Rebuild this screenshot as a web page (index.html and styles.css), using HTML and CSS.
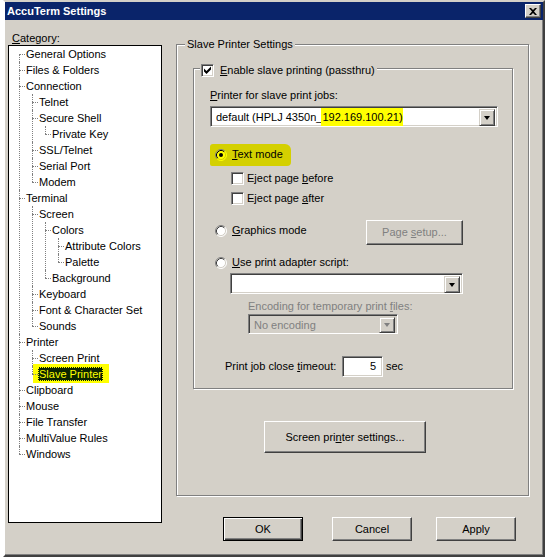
FILE: index.html
```html
<!DOCTYPE html>
<html lang="en">
<head>
    <meta charset="UTF-8">
    <meta name="viewport" content="width=device-width, initial-scale=1.0">
    <title>AccuTerm Settings</title>
    <link rel="stylesheet" href="styles.css">
</head>
<body>
    <div class="window">
        <div class="titlebar">
            <span class="title">AccuTerm Settings</span>
            <span class="close-btn">
                <svg width="8" height="7" viewBox="0 0 8 7"><path d="M0 0h2l2 2 2-2h2L5 3.5 8 7H6L4 5 2 7H0l3-3.5z" fill="#000"/></svg>
            </span>
        </div>

        <div class="main">
            <div class="left-col">
                <div class="cat-label"><u>C</u>ategory:</div>
                <div class="tree-box">
                    <ul class="tree">
                        <li><span class="node">General Options</span></li>
                        <li><span class="node">Files &amp; Folders</span></li>
                        <li><span class="node">Connection</span>
                            <ul>
                                <li><span class="node">Telnet</span></li>
                                <li><span class="node">Secure Shell</span>
                                    <ul>
                                        <li><span class="node">Private Key</span></li>
                                    </ul>
                                </li>
                                <li><span class="node">SSL/Telnet</span></li>
                                <li><span class="node">Serial Port</span></li>
                                <li><span class="node">Modem</span></li>
                            </ul>
                        </li>
                        <li><span class="node">Terminal</span>
                            <ul>
                                <li><span class="node">Screen</span>
                                    <ul>
                                        <li><span class="node">Colors</span>
                                            <ul>
                                                <li><span class="node">Attribute Colors</span></li>
                                                <li><span class="node">Palette</span></li>
                                            </ul>
                                        </li>
                                        <li><span class="node">Background</span></li>
                                    </ul>
                                </li>
                                <li><span class="node">Keyboard</span></li>
                                <li><span class="node">Font &amp; Character Set</span></li>
                                <li><span class="node">Sounds</span></li>
                            </ul>
                        </li>
                        <li><span class="node">Printer</span>
                            <ul>
                                <li><span class="node">Screen Print</span></li>
                                <li><span class="tree-marker"><span class="node sel">Slave Printer</span></span></li>
                            </ul>
                        </li>
                        <li><span class="node">Clipboard</span></li>
                        <li><span class="node">Mouse</span></li>
                        <li><span class="node">File Transfer</span></li>
                        <li><span class="node">MultiValue Rules</span></li>
                        <li><span class="node">Windows</span></li>
                    </ul>
                </div>
            </div>

            <div class="right-col">
                <div class="group outer-group">
                    <div class="group-title outer-title">Slave Printer Settings</div>

                    <div class="group inner-group">
                        <div class="group-title inner-title">
                            <span class="checkbox">
                                <svg width="11" height="11" viewBox="1 1 11 11"><polygon points="3,4.5 5.5,7 10,2.5 10,5.5 5.5,10 3,7.5" fill="#000"/></svg>
                            </span>
                            <span class="cb-text"><u>E</u>nable slave printing (passthru)</span>
                        </div>

                        <div class="field-label printer-label"><u>P</u>rinter for slave print jobs:</div>
                        <div class="combo printer-combo">
                            <span class="combo-text">default (HPLJ 4350n_<span class="hl">192.169.100.21)</span></span>
                            <span class="combo-btn"><span class="arrow"></span></span>
                        </div>

                        <div class="row text-mode-row">
                            <span class="row-marker">
                                <svg class="radio" width="12" height="12" viewBox="0 0 12 12">
                                    <circle cx="6" cy="6" r="5" fill="#ffff00"/>
                                    <path d="M2.11 9.89A5.5 5.5 0 0 1 9.89 2.11" fill="none" stroke="#808080"/>
                                    <path d="M9.89 2.11A5.5 5.5 0 0 1 2.11 9.89" fill="none" stroke="#ffff00"/>
                                    <path d="M2.82 9.18A4.5 4.5 0 0 1 9.18 2.82" fill="none" stroke="#000"/>
                                    <path d="M9.18 2.82A4.5 4.5 0 0 1 2.82 9.18" fill="none" stroke="#d4d000"/>
                                    <circle cx="6" cy="6" r="2" fill="#000"/>
                                </svg>
                                <span class="radio-text"><u>T</u>ext mode</span>
                            </span>
                        </div>

                        <div class="row check-row eject-before">
                            <span class="checkbox"></span>
                            <span class="cb-text">Eject page <u>b</u>efore</span>
                        </div>
                        <div class="row check-row eject-after">
                            <span class="checkbox"></span>
                            <span class="cb-text">Eject page <u>a</u>fter</span>
                        </div>

                        <div class="row radio-row graphics-row">
                            <span class="radio-label">
                                <svg class="radio" width="12" height="12" viewBox="0 0 12 12">
                                    <circle cx="6" cy="6" r="5" fill="#fff"/>
                                    <path d="M2.11 9.89A5.5 5.5 0 0 1 9.89 2.11" fill="none" stroke="#808080"/>
                                    <path d="M9.89 2.11A5.5 5.5 0 0 1 2.11 9.89" fill="none" stroke="#fff"/>
                                    <path d="M2.82 9.18A4.5 4.5 0 0 1 9.18 2.82" fill="none" stroke="#404040"/>
                                    <path d="M9.18 2.82A4.5 4.5 0 0 1 2.82 9.18" fill="none" stroke="#d4d0c8"/>
                                </svg>
                                <span class="radio-text"><u>G</u>raphics mode</span>
                            </span>
                            <span class="btn page-setup disabled"><span>Page <u>s</u>etup...</span></span>
                        </div>

                        <div class="row radio-row adapter-row">
                            <span class="radio-label">
                                <svg class="radio" width="12" height="12" viewBox="0 0 12 12">
                                    <circle cx="6" cy="6" r="5" fill="#fff"/>
                                    <path d="M2.11 9.89A5.5 5.5 0 0 1 9.89 2.11" fill="none" stroke="#808080"/>
                                    <path d="M9.89 2.11A5.5 5.5 0 0 1 2.11 9.89" fill="none" stroke="#fff"/>
                                    <path d="M2.82 9.18A4.5 4.5 0 0 1 9.18 2.82" fill="none" stroke="#404040"/>
                                    <path d="M9.18 2.82A4.5 4.5 0 0 1 2.82 9.18" fill="none" stroke="#d4d0c8"/>
                                </svg>
                                <span class="radio-text"><u>U</u>se print adapter script:</span>
                            </span>
                        </div>
                        <div class="combo adapter-combo">
                            <span class="combo-text"></span>
                            <span class="combo-btn"><span class="arrow"></span></span>
                        </div>

                        <div class="field-label encoding-label disabled">Encoding for temporary print <u>f</u>iles:</div>
                        <div class="combo encoding-combo disabled">
                            <span class="combo-text">No encoding</span>
                            <span class="combo-btn"><span class="arrow"></span></span>
                        </div>

                        <div class="row timeout-row">
                            <span class="timeout-label">Print job close <u>t</u>imeout:</span>
                            <span class="edit">5</span>
                            <span class="unit">sec</span>
                        </div>
                    </div>

                    <span class="btn screen-btn"><span>Screen pri<u>n</u>ter settings...</span></span>
                </div>

                <div class="dialog-buttons">
                    <span class="btn default-btn"><span>OK</span></span>
                    <span class="btn"><span>Cancel</span></span>
                    <span class="btn"><span>Apply</span></span>
                </div>
            </div>
        </div>
    </div>
</body>
</html>
```

FILE: styles.css
```css
body {
    margin: 0;
    background: #fff;
    font-family: "Liberation Sans", Arial, sans-serif;
    font-size: 11px;
    color: #000;
}

.window {
    box-sizing: border-box;
    width: 542px;
    height: 557px;
    margin-left: 3px;
    background: #d4d0c8;
    border: 2px solid;
    border-color: #d4d0c8 #404040 #404040 #fff;
    box-shadow: inset -1px -1px 0 #808080;
}

.titlebar {
    display: flex;
    align-items: center;
    height: 18px;
    padding: 0 2px;
    background: #0a246a;
}
.title {
    color: #fff;
    font-weight: bold;
    line-height: 18px;
}
.close-btn {
    box-sizing: border-box;
    display: flex;
    align-items: center;
    justify-content: center;
    width: 16px;
    height: 14px;
    margin-left: auto;
    background: #d4d0c8;
    border: 1px solid;
    border-color: #fff #404040 #404040 #fff;
    box-shadow: inset -1px -1px 0 #808080;
}

.main {
    display: flex;
    padding-left: 3px;
}

.left-col {
    width: 154px;
    padding-top: 11px;
}
.cat-label {
    line-height: 14px;
    padding-left: 4px;
}
.tree-box {
    box-sizing: border-box;
    height: 478px;
    background: #fff;
    border: 1px solid #000;
    overflow: hidden;
}

.tree, .tree ul {
    list-style: none;
    margin: 0;
    padding: 0 0 0 13px;
}
.tree {
    padding-left: 16px;
}
.tree li {
    position: relative;
    line-height: 16px;
    white-space: nowrap;
}
.tree li::before {
    content: "";
    position: absolute;
    left: -6px;
    top: 8px;
    width: 6px;
    border-top: 1px dotted #808080;
}
.tree li::after {
    content: "";
    position: absolute;
    left: -6px;
    top: 0;
    bottom: 0;
    border-left: 1px dotted #808080;
}
.tree li:last-child::after {
    bottom: auto;
    height: 8px;
}
.tree > li:first-child::after {
    top: 8px;
}
.node {
    padding: 0 1px;
}
.tree-marker {
    background: #ffff00;
    padding: 4px 6px 3px 5px;
    margin: 0 -6px 0 -5px;
}
.node.sel {
    position: relative;
    z-index: 1;
    background: #0a2400;
    color: #ffff00;
    padding: 1px;
    outline: 1px dotted #ffff00;
    outline-offset: -1px;
}

.right-col {
    width: 353px;
    margin-left: 14px;
}

.group {
    border: 1px solid #808080;
    box-shadow: 1px 1px 0 #fff, inset 1px 1px 0 #fff;
}
.group-title {
    width: max-content;
    background: #d4d0c8;
}
.outer-group {
    margin-top: 24px;
    padding: 0 15px 42px 16px;
}
.outer-title {
    line-height: 13px;
    margin: -7px 0 0 -8px;
    padding: 0 2px;
}
.inner-group {
    margin-top: 17px;
    padding: 0 16px 15px 16px;
}
.inner-title {
    display: flex;
    align-items: center;
    height: 14px;
    line-height: 14px;
    margin: -6px 0 0 -10px;
    padding: 0 2px 0 1px;
}

.checkbox {
    box-sizing: border-box;
    display: flex;
    flex: none;
    width: 13px;
    height: 13px;
    background: #fff;
    border: 1px solid;
    border-color: #808080 #fff #fff #808080;
    box-shadow: inset 1px 1px 0 #404040, inset -1px -1px 0 #d4d0c8;
}
.cb-text {
    margin-left: 6px;
}

.field-label {
    line-height: 13px;
}
.printer-label {
    margin-top: 12px;
}

.combo {
    box-sizing: border-box;
    display: flex;
    height: 21px;
    padding: 2px;
    background: #fff;
    border: 1px solid;
    border-color: #808080 #fff #fff #808080;
    box-shadow: inset 1px 1px 0 #404040, inset -1px -1px 0 #d4d0c8;
}
.combo-text {
    flex: 1;
    padding-left: 3px;
    line-height: 17px;
    white-space: nowrap;
}
.combo-btn {
    box-sizing: border-box;
    display: flex;
    align-items: center;
    justify-content: center;
    width: 16px;
    height: 17px;
    background: #d4d0c8;
    border: 1px solid;
    border-color: #d4d0c8 #404040 #404040 #d4d0c8;
    box-shadow: inset 1px 1px 0 #fff, inset -1px -1px 0 #808080;
}
.arrow {
    width: 0;
    height: 0;
    border-left: 3.5px solid transparent;
    border-right: 3.5px solid transparent;
    border-top: 4px solid #000;
}
.hl {
    background: #ffff00;
    padding: 3px 0 3px 1px;
    margin-left: -1px;
}
.printer-combo {
    width: 288px;
    margin-top: 4px;
}

.row {
    display: flex;
    align-items: center;
    height: 13px;
    line-height: 13px;
}
.radio {
    flex: none;
}
.radio-text {
    margin-left: 5px;
}
.text-mode-row {
    margin-top: 21px;
}
.row-marker {
    display: flex;
    align-items: center;
    background: #d4d000;
    border-radius: 3px 6px 4px 2px;
    margin: -4px 0 -5px 0;
    padding: 4px 8px 5px 5px;
}
.check-row {
    padding-left: 21px;
}
.check-row .cb-text {
    margin-left: 3px;
}
.eject-before {
    margin-top: 11px;
}
.eject-after {
    margin-top: 7px;
}
.radio-row {
    padding-left: 5px;
}
.radio-label {
    display: flex;
    align-items: center;
    width: 151px;
}
.graphics-row {
    margin-top: 19px;
}
.adapter-row {
    margin-top: 19px;
}
.adapter-combo {
    width: 233px;
    margin: 4px 0 0 20px;
}

.disabled {
    color: #808080;
}
.encoding-label {
    margin: 6px 0 0 38px;
}
.encoding-combo {
    width: 150px;
    height: 20px;
    margin: 1px 0 0 38px;
    background: #d4d0c8;
}
.encoding-combo .combo-text {
    line-height: 16px;
}
.encoding-combo .combo-btn {
    height: 16px;
}
.encoding-combo .arrow {
    border-top-color: #808080;
}

.timeout-row {
    margin-top: 26px;
    padding-left: 15px;
}
.timeout-label {
    width: 117px;
}
.edit {
    box-sizing: border-box;
    width: 41px;
    height: 21px;
    padding-right: 6px;
    line-height: 19px;
    text-align: right;
    background: #fff;
    border: 1px solid;
    border-color: #808080 #fff #fff #808080;
    box-shadow: inset 1px 1px 0 #404040, inset -1px -1px 0 #d4d0c8;
}
.unit {
    margin-left: 3px;
}

.btn {
    box-sizing: border-box;
    display: flex;
    flex: none;
    align-items: center;
    justify-content: center;
    width: 80px;
    height: 24px;
    background: #d4d0c8;
    border: 1px solid;
    border-color: #fff #404040 #404040 #fff;
    box-shadow: inset -1px -1px 0 #808080;
    white-space: nowrap;
}
.page-setup {
    width: 97px;
    height: 25px;
    margin-top: 3px;
}
.screen-btn {
    width: 162px;
    height: 32px;
    margin: 32px 0 0 71px;
}

.dialog-buttons {
    display: flex;
    justify-content: flex-end;
    margin-top: 21px;
    padding-right: 13px;
}
.dialog-buttons .btn {
    margin-left: 24px;
}
.dialog-buttons .default-btn {
    margin-left: 0;
    margin-right: 5px;
    border-color: #000;
    box-shadow: inset 1px 1px 0 #fff, inset -1px -1px 0 #404040, inset -2px -2px 0 #808080;
}
```
